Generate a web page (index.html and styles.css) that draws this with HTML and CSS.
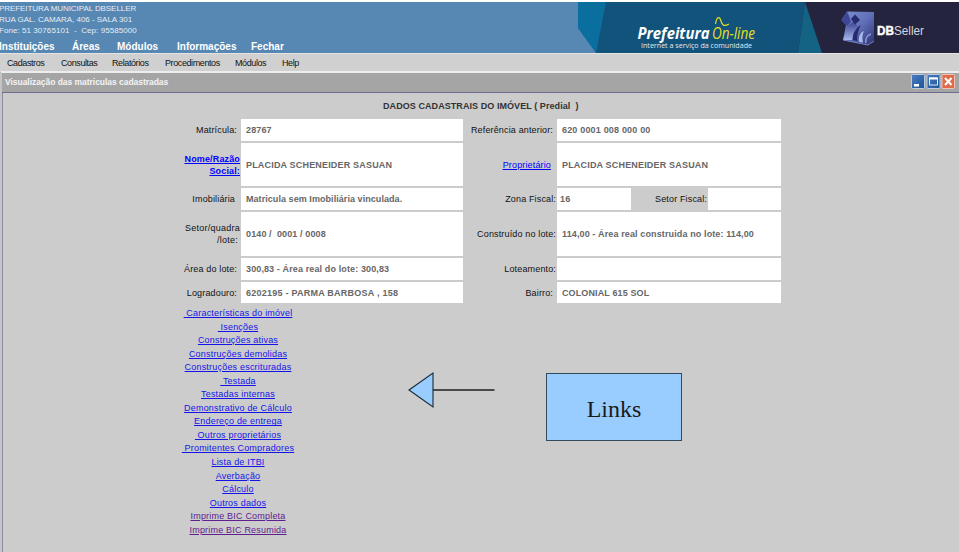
FILE: index.html
```html
<!DOCTYPE html>
<html lang="pt-BR">
<head>
<meta charset="utf-8">
<title>DBSeller - Cadastro</title>
<link rel="stylesheet" href="styles.css">
</head>
<body>
<header class="banner">
  <div class="banner-left">
    <div class="org">
      <div><span class="org-name">PREFEITURA MUNICIPAL DBSELLER</span></div>
      <div><span class="org-street">RUA GAL. CAMARA, 406 - SALA 301</span></div>
      <div><span class="org-phone">Fone: 51 30765101 &nbsp;- &nbsp;Cep: 95585000</span></div>
    </div>
    <nav class="main-nav"><a class="n1">Instituições</a><a class="n2">Áreas</a><a class="n3">Módulos</a><a class="n4">Informações</a><a class="n5">Fechar</a></nav>
  </div>
  <svg class="banner-art" width="381" height="51" viewBox="578 2 381 51">
    <rect x="578" y="2" width="381" height="51" fill="#12537b"/>
    <path d="M578 2H606L596 53L578 28Z" fill="#0a6e9f"/>
    <path d="M578 28L596 53H578Z" fill="#5787b3"/>
    <path d="M805 2H959V53H798Z" fill="#24243f"/>
    <path d="M805 2L822 53H798Z" fill="#156384"/>
    <text x="637.500" y="38.500" class="logo-pref" textLength="72" lengthAdjust="spacingAndGlyphs">Prefeitura</text>
    <text x="712" y="38.500" class="logo-online" textLength="43" lengthAdjust="spacingAndGlyphs">On-line</text>
    <path d="M715.500 24C717 15 720 17 721 21S724 27 729 24" fill="none" stroke="#e4de20" stroke-width="1.200"/>
    <text x="641" y="48" class="logo-sub" textLength="111" lengthAdjust="spacingAndGlyphs">Internet a serviço da comunidade</text>
    <defs>
      <linearGradient id="cube" x1="0" y1="0" x2="1" y2="1"><stop offset="0" stop-color="#7f8fd0"/><stop offset=".5" stop-color="#6070b8"/><stop offset="1" stop-color="#2c3274"/></linearGradient>
      <linearGradient id="side" x1="0" y1="0" x2="0" y2="1"><stop offset="0" stop-color="#3b4390"/><stop offset="1" stop-color="#a5b7ea"/></linearGradient>
    </defs>
    <path d="M847 11.500L874 12V41L868 45L843 40L846 25L841.500 20Z" fill="url(#cube)"/>
    <path d="M847 11.500L841.500 20L847 26L851 22L849 16Z" fill="#3d4797"/>
    <path d="M847 26L853 22L859 27L854 32L852 40L843 40Z" fill="url(#side)"/>
    <path d="M855 14.500L860 20L855 24.500L851 19Z" fill="#262a6c"/>
    <path d="M853 40C852 33 857 27 861 25C858 30 857 35 857 41Z" fill="#252b6c"/>
    <path d="M859 42C858 36 861 32 864 31C862 35 862 38 863 42.500Z" fill="#aabced"/>
    <path d="M866 43C865 38 868 35 871 34" fill="none" stroke="#8998d5" stroke-width="1.500"/>
    <path d="M843 40L868 45L874 41" fill="none" stroke="#7585c6" stroke-width="1"/>
    <text x="877" y="34.500" class="logo-db" textLength="17" lengthAdjust="spacingAndGlyphs">DB</text>
    <text x="894" y="34.500" class="logo-seller" textLength="30" lengthAdjust="spacingAndGlyphs">Seller</text>
  </svg>
</header>
<nav class="menu"><a class="m1">Cadastros</a><a class="m2">Consultas</a><a class="m3">Relatórios</a><a class="m4">Procedimentos</a><a class="m5">Módulos</a><a class="m6">Help</a></nav>
<section class="window">
  <div class="titlebar">
    <span class="win-title">Visualização das matriculas cadastradas</span>
    <svg width="44" height="15" viewBox="911 74 44 15">
      <defs><linearGradient id="b" x1="0" y1="0" x2="1" y2="1"><stop offset="0" stop-color="#4a7dc0"/><stop offset="1" stop-color="#1d5599"/></linearGradient></defs>
      <rect x="911.5" y="74.500" width="13" height="14" rx="1" fill="url(#b)" stroke="#b8cbe0"/><rect x="914" y="84" width="5" height="2.500" fill="#fff"/>
      <rect x="927" y="74.500" width="13" height="14" rx="1" fill="url(#b)" stroke="#b8cbe0"/><path d="M929.500 78h8v7h-8z" fill="none" stroke="#dfe9f5"/><path d="M929 78.500h9" stroke="#fff" stroke-width="2"/>
      <rect x="942" y="74.500" width="12.500" height="14" rx="1" fill="#e06a4a" stroke="#efc4b8"/><path d="M945 78l6.500 7M951.500 78l-6.500 7" stroke="#fff" stroke-width="2"/>
    </svg>
  </div>
  <main class="content">
    <h1><span class="heading">DADOS CADASTRAIS DO IMÓVEL ( Predial &nbsp;)</span></h1>
    <div class="data">
      <div class="label"><span>Matrícula:</span></div><div class="value"><span>28767</span></div>
      <div class="label"><span>Referência anterior:</span></div><div class="value"><span class="spaced">620 0001 008 000 00</span></div>

      <div class="label tight"><a class="link strong">Nome/Razão<br>Social:</a></div><div class="value"><span class="spaced">PLACIDA SCHENEIDER SASUAN</span></div>
      <div class="label wide"><a class="link">Proprietário</a></div><div class="value"><span class="spaced">PLACIDA SCHENEIDER SASUAN</span></div>

      <div class="label wide"><span>Imobiliária</span></div><div class="value"><span class="compact">Matricula sem Imobiliária vinculada.</span></div>
      <div class="label tight"><span>Zona Fiscal:</span></div>
      <div class="split"><div class="value near"><span>16</span></div><div class="label tight"><span>Setor Fiscal:</span></div><div class="value"></div></div>

      <div class="label tight"><span class="parcel">Setor/quadra<br><span class="indent">/lote:</span></span></div><div class="value"><span>0140 / &nbsp;0001 / 0008</span></div>
      <div class="label tight"><span>Construído no lote:</span></div><div class="value"><span>114,00 - Área real construida no lote: 114,00</span></div>

      <div class="label"><span>Área do lote:</span></div><div class="value"><span>300,83 - Área real do lote: 300,83</span></div>
      <div class="label tight"><span>Loteamento:</span></div><div class="value"></div>

      <div class="label"><span>Logradouro:</span></div><div class="value"><span class="address">6202195 - PARMA BARBOSA , 158</span></div>
      <div class="label"><span>Bairro:</span></div><div class="value"><span>COLONIAL 615 SOL</span></div>
    </div>
    <div class="lower">
      <ul class="links">
        <li><a>&nbsp;Características do imóvel</a></li>
        <li><a>&nbsp;Isenções</a></li>
        <li><a>Construções ativas</a></li>
        <li><a>Construções demolidas</a></li>
        <li><a>Construções escrituradas</a></li>
        <li><a>&nbsp;Testada</a></li>
        <li><a>Testadas internas</a></li>
        <li><a>Demonstrativo de Cálculo</a></li>
        <li><a>Endereço de entrega</a></li>
        <li><a>&nbsp;Outros proprietários</a></li>
        <li><a>&nbsp;Promitentes Compradores</a></li>
        <li><a>Lista de ITBI</a></li>
        <li><a>Averbação</a></li>
        <li><a>Cálculo</a></li>
        <li><a>Outros dados</a></li>
        <li><a class="visited">Imprime BIC Completa</a></li>
        <li><a class="visited">Imprime BIC Resumida</a></li>
      </ul>
      <svg class="arrow" width="88" height="38" viewBox="408 371 88 38"><path d="M433 390H494.500" stroke="#1c2020" stroke-width="1.600"/><path d="M409 390L433 373V407Z" fill="#99ccff" stroke="#1c2830" stroke-width="1.100"/></svg>
      <div class="callout"><span>Links</span></div>
    </div>
  </main>
</section>
</body>
</html>
```
FILE: styles.css
```css
* { box-sizing: border-box; }
body { margin: 0; padding-top: 2px; width: 959px; height: 552px; overflow: hidden; background: #fff; font-family: "Liberation Sans", Arial, sans-serif; font-size: 9px; color: #111; }
a, span { white-space: nowrap; }
.banner { display: flex; height: 51px; background: #5787b3; }
.banner-left { width: 578px; overflow: hidden; }
.banner-art { display: block; }
.org { height: 37px; padding-top: 1px; font-size: 8px; line-height: 11px; color: #e4edf6; margin-left: -1px; }
.org-name { letter-spacing: -.07px; }
.org-street { letter-spacing: -.02px; }
.org-phone { letter-spacing: .06px; }
.main-nav { display: flex; height: 14px; line-height: 16px; font-size: 10px; font-weight: bold; color: #fff; margin-left: -1px; }
.main-nav a { flex: none; }
.n1 { width: 73px; }
.n2 { width: 45px; }
.n3 { width: 60px; }
.n4 { width: 74px; }
.logo-pref { font: italic bold 16px "Open Sans", sans-serif; fill: #fff; }
.logo-online { font: italic 16px "Open Sans", sans-serif; fill: #e4de20; }
.logo-sub { font: 7.500px "Open Sans", sans-serif; fill: #e0eaf2; }
.logo-db { font: bold 12px "Liberation Sans", sans-serif; fill: #fff; stroke: #fff; stroke-width: .4px; }
.logo-seller { font: 13px "Liberation Sans", sans-serif; fill: #d5d5df; }
.menu { display: flex; height: 18px; padding-left: 7px; border-top: 1px solid #e4e4e4; background: #d0d0d0; line-height: 19px; font-size: 9px; letter-spacing: -.4px; }
.menu a { flex: none; }
.m1 { width: 54px; }
.m2 { width: 51px; }
.m3 { width: 53px; }
.m4 { width: 70px; }
.m5 { width: 47px; }
.window { height: 481px; border-top: 2px solid #ededed; border-left: 2px solid #c4c4c4; background: #ccc; }
.titlebar { display: flex; justify-content: space-between; height: 20px; padding: 1px 4px 0 3px; border-bottom: 1px solid #6d6b8e; background: #a5a5a5; font-size: 8.500px; line-height: 16px; font-weight: bold; color: #f4f4f4; }
.win-title { letter-spacing: -.04px; }
.content { height: 459px; padding-left: 178px; border-left: 1px solid #8f8da5; }
h1 { margin: 0; height: 26px; width: 600px; padding-left: 202px; font-size: 9px; line-height: 27px; letter-spacing: .07px; color: #333; }
.data { display: grid; grid-template-columns: 60px 222px 94px 224px; grid-template-rows: 22px 43px 22px 44px 22px 21px; row-gap: 2px; }
.label { display: flex; align-items: center; justify-content: flex-end; padding-right: 4px; text-align: right; line-height: 12px; letter-spacing: .15px; }
.tight { padding-right: 1px; }
.wide { padding-right: 6px; }
.value { display: flex; align-items: center; padding-left: 5px; background: #fff; font-weight: bold; color: #666; letter-spacing: .12px; }
.spaced { letter-spacing: .18px; }
.compact { letter-spacing: .06px; }
.address { letter-spacing: .24px; }
.near { padding-left: 3px; }
.split { display: grid; grid-template-columns: 74px 77px 73px; }
.link { color: #00f; text-decoration: underline; }
.strong { font-weight: bold; }
.parcel { letter-spacing: .24px; }
.indent { padding-right: 2px; }
.lower { position: relative; padding-top: 4px; }
.links { list-style: none; margin: 0; padding: 0; width: 114px; text-align: center; color: #1414e8; letter-spacing: .2px; }
.links li { height: 13.55px; line-height: 13.55px; }
.links a { text-decoration: underline; }
.links .visited { color: #602090; }
.arrow { position: absolute; left: 227px; top: 68px; }
.callout { position: absolute; left: 365px; top: 70px; width: 136px; height: 68px; display: flex; align-items: center; justify-content: center; padding-top: 4px; border: 1px solid #34495c; background: #99ccff; font: 24px "Liberation Serif", serif; color: #1a1a1a; }
```
